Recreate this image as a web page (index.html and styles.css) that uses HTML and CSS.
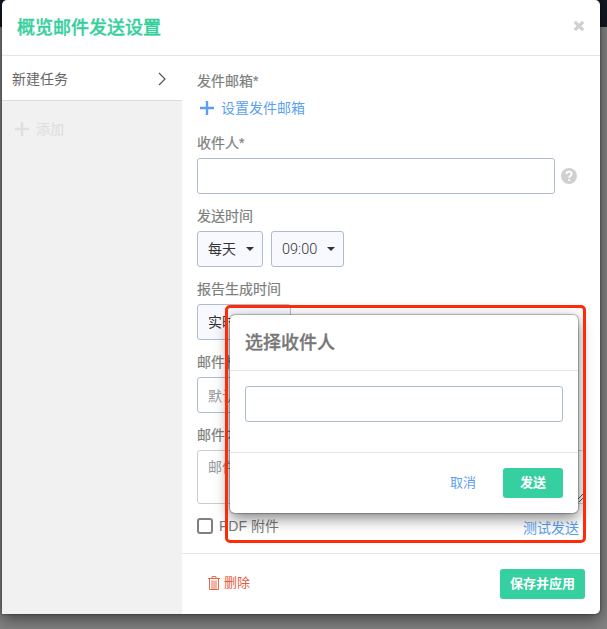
FILE: index.html
```html
<!DOCTYPE html>
<html lang="zh-CN">
<head>
<meta charset="utf-8">
<title>概览邮件发送设置</title>
<link rel="stylesheet" href="styles.css">
</head>
<body>
<div class="topbar"></div>
<main class="modal">
  <header class="modal-header">
    <h1>概览邮件发送设置</h1>
    <svg class="close" width="12" height="12" viewBox="0 0 12 12"><path d="M1.8 1.8l8.4 8.4M10.2 1.8l-8.4 8.4" stroke="#d0d0d0" stroke-width="3.2"/></svg>
  </header>
  <div class="modal-body">
    <aside class="sidebar">
      <div class="task"><span>新建任务</span><svg width="8" height="14" viewBox="0 0 8 14"><path d="M1 1l6 6-6 6" fill="none" stroke="#555" stroke-width="1.2"/></svg></div>
      <div class="add"><svg width="14" height="14" viewBox="0 0 14 14"><path d="M7 0v14M0 7h14" stroke="#dfe0e1" stroke-width="2.6"/></svg><span>添加</span></div>
    </aside>
    <section class="content">
      <form class="form">
        <label class="label">发件邮箱*</label>
        <a class="link"><svg width="14" height="14" viewBox="0 0 14 14"><path d="M7 0v14M0 7h14" stroke="#5c9ff0" stroke-width="2.4"/></svg><span>设置发件邮箱</span></a>
        <label class="label">收件人*</label>
        <div class="row recipient">
          <div class="field"></div>
          <svg width="16" height="16" viewBox="0 0 16 16"><circle cx="8" cy="8" r="8" fill="#d0d0d0"/><path d="M5.4 6.1C5.4 4.5 6.5 3.6 8 3.6s2.7.9 2.7 2.3c0 1.8-2.5 1.9-2.5 3.9" fill="none" stroke="#fff" stroke-width="1.8"/><path d="M7.2 11.2h2v1.9h-2z" fill="#fff"/></svg>
        </div>
        <label class="label">发送时间</label>
        <div class="row">
          <div class="select day"><span>每天</span><i class="caret"></i></div>
          <div class="select time"><span>09:00</span><i class="caret"></i></div>
        </div>
        <label class="label">报告生成时间</label>
        <div class="row"><div class="select mode"><span>实时</span><i class="caret"></i></div></div>
        <label class="label">邮件标题</label>
        <div class="row"><div class="field hint">默认</div></div>
        <label class="label">邮件内容</label>
        <div class="area">邮件<svg class="grip" width="8" height="8" viewBox="0 0 8 8"><path d="M0 8l8-8M4 8l4-4" stroke="#555" stroke-width="1"/></svg></div>
        <div class="options"><span class="pdf"><i class="check"></i>PDF 附件</span><a class="test">测试发送</a></div>
      </form>
      <footer class="footer">
        <a class="delete"><svg width="12" height="14" viewBox="0 0 12 14"><path d="M0 2.5h12M4 2.5V.6h4v1.9M1.5 3v10.5h9V3M4 4.5V13M6 4.5V13M8 4.5V13" fill="none" stroke="#e8694c" stroke-width="1"/></svg>删除</a>
        <span class="button save">保存并应用</span>
      </footer>
    </section>
  </div>
</main>
<div class="dialog">
  <h2>选择收件人</h2>
  <div class="dialog-body"><div class="field"></div></div>
  <div class="dialog-footer"><a>取消</a><span class="button send">发送</span></div>
</div>
<div class="marker"></div>
</body>
</html>
```
FILE: styles.css
```css
* { box-sizing: border-box; }
body {
  margin: 0;
  height: 629px;
  overflow: hidden;
  background: #828282;
  color: #777;
  font: 14px/20px "Helvetica Neue", "Liberation Sans", "Noto Sans CJK SC", sans-serif;
}
svg { display: block; flex: none; }
h1, h2 { margin: 0; font-size: 18px; font-weight: 500; -webkit-text-stroke: .3px currentColor; }
.topbar { position: absolute; top: 0; left: 0; width: 100%; height: 27px; background: #131722; }
.modal {
  position: relative;
  display: flex;
  flex-direction: column;
  width: 598px;
  height: 614px;
  margin-left: 2px;
  background: #fff;
  border-radius: 5px 5px 5px 0;
  box-shadow: 0 5px 15px rgba(0, 0, 0, .5), 0 0 2px rgba(0, 0, 0, .6);
}
.modal-header {
  display: flex;
  justify-content: space-between;
  height: 56px;
  padding: 18px 15px 0;
  border-bottom: 1px solid #e5e5e5;
  color: #35cf9d;
}
.close { margin: 2px 0 0; }
.modal-body { display: flex; flex: 1; }
.sidebar { width: 180px; background: #f1f1f1; }
.task {
  display: flex;
  align-items: center;
  justify-content: space-between;
  height: 45px;
  padding: 1px 16px 0 10px;
  border-bottom: 1px solid #dcdcdc;
  background: #fff;
  color: #666;
}
.add { display: flex; align-items: center; gap: 7px; padding: 18px 13px; color: #dfe0e1; -webkit-text-stroke: .2px currentColor; }
.content { display: flex; flex: 1; flex-direction: column; }
.form { flex: 1; padding: 15px 15px 0; }
.label { display: block; height: 20px; margin-bottom: 5px; color: #7d7f7d; -webkit-text-stroke: .2px currentColor; }
.link { display: flex; align-items: center; gap: 7px; margin: 7px 0 15px 3px; color: #5c9ff0; }
.row { display: flex; gap: 8px; margin-bottom: 12px; }
.recipient { align-items: center; gap: 6px; }
.field { flex: none; width: 358px; height: 36px; border: 1px solid #afbccd; border-radius: 3px; background: #fff; }
.hint { padding: 8px 10px; color: #999; }
.select {
  display: flex;
  align-items: center;
  justify-content: space-between;
  height: 36px;
  padding: 0 8px 0 10px;
  border: 1px solid #afbccd;
  border-radius: 3px;
  background: #f8f9fe;
  color: #333;
}
.day { width: 66px; }
.time { width: 73px; }
.time span { padding-top: 2px; font-family: Roboto, "Liberation Sans", sans-serif; font-size: 14.5px; font-weight: 300; }
.mode { width: 94px; }
.caret { border: 4px solid transparent; border-top-color: #333; border-bottom: 0; }
.area { position: relative; height: 54px; padding: 6px 10px; border: 1px solid #ccc; border-radius: 3px; color: #999; }
.grip { position: absolute; right: 1px; bottom: 1px; }
.options { display: flex; align-items: flex-start; justify-content: space-between; padding: 12px 6px 0 0; }
.pdf { display: flex; align-items: center; gap: 6px; }
.check { width: 16px; height: 16px; border: 2px solid #808080; border-radius: 3px; }
.test { margin-top: 2px; color: #5c9ff0; }
.footer {
  display: flex;
  align-items: center;
  justify-content: space-between;
  height: 61px;
  padding: 0 15px 0 26px;
  border-top: 1px solid #e5e5e5;
  font-size: 13px;
}
.delete { display: flex; align-items: center; gap: 4px; margin-bottom: 2px; color: #e85c3c; }
.button { height: 30px; border-radius: 3px; background: #36cfa0; color: #fff; font-size: 13px; font-weight: 700; line-height: 30px; text-align: center; }
.save { width: 85px; }
.dialog {
  position: absolute;
  top: 315px;
  left: 230px;
  width: 348px;
  height: 198px;
  border-radius: 5px;
  background: #fff;
  box-shadow: 0 5px 15px rgba(0, 0, 0, .5), 0 0 1px 1px rgba(0, 0, 0, .25);
}
.dialog h2 { height: 56px; padding: 18px 15px; border-bottom: 1px solid #e5e5e5; }
.dialog-body { height: 81px; padding: 15px; }
.dialog-body .field { width: 318px; }
.dialog-footer {
  display: flex;
  align-items: center;
  justify-content: flex-end;
  gap: 27px;
  height: 61px;
  padding-right: 15px;
  border-top: 1px solid #e5e5e5;
  color: #5c9ff0;
  font-size: 13px;
}
.send { width: 60px; }
.marker { position: absolute; top: 305px; left: 225px; width: 361px; height: 238px; border: 3px solid #ff2b08; border-radius: 5px; }
```
